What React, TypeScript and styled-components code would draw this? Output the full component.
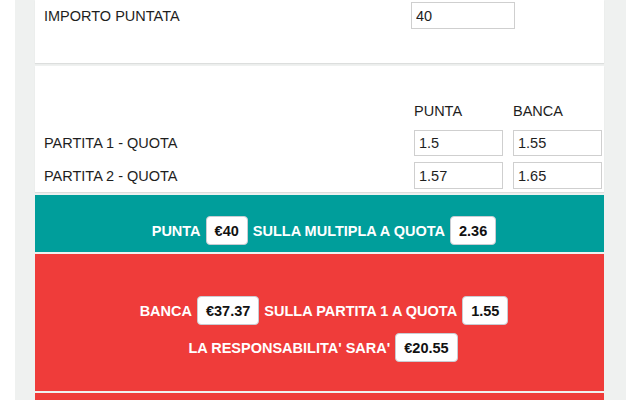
import styled, { createGlobalStyle } from "styled-components";

const GlobalStyle = createGlobalStyle`
  body {
    margin: 0;
    background: #ffffff;
    font-family: "Liberation Sans", Arial, Helvetica, sans-serif;
    color: #222;
  }
`;

const StyledPage = styled.div`
  margin-left: 15px;
  width: 611px;
  min-height: 400px;
  padding: 0 22px 0 20px;
  box-sizing: border-box;
  background: #eff1f0;
  display: flex;
  flex-direction: column;
  gap: 2px;
`;

const StyledCard = styled.div<{ $top?: number; $bottom?: number }>`
  background: #fff;
  box-shadow: 0 1px 1px rgba(0, 0, 0, 0.08);
  padding: ${({ $top = 0 }) => $top}px 2px ${({ $bottom = 0 }) => $bottom}px 9px;
  margin-bottom: 1px;
`;

const StyledGrid = styled.div<{ $cols: string; $rowGap?: number; $right?: number }>`
  display: grid;
  grid-template-columns: ${({ $cols }) => $cols};
  column-gap: 10px;
  row-gap: ${({ $rowGap = 6 }) => $rowGap}px;
  align-items: center;
  padding-right: ${({ $right = 0 }) => $right}px;
`;

const StyledLabel = styled.div`
  font-size: 14.5px;
  color: #1e1e1e;
`;

const StyledHead = styled.div`
  font-size: 14.5px;
  color: #1e1e1e;
  padding-bottom: 5px;
`;

const StyledInput = styled.input<{ $h?: number }>`
  box-sizing: border-box;
  width: 100%;
  height: ${({ $h = 26 }) => $h}px;
  border: 1px solid #cfcfcf;
  border-radius: 0;
  padding: 0 4px;
  font-family: "Liberation Sans", Arial, sans-serif;
  font-size: 14.5px;
  color: #1e1e1e;
  background: #fff;
  outline: none;
`;

const StyledBanner = styled.div<{ $bg: string; $top: number; $bottom: number }>`
  background: ${({ $bg }) => $bg};
  padding: ${({ $top }) => $top}px 0 ${({ $bottom }) => $bottom}px;
  display: flex;
  flex-direction: column;
  align-items: center;
  gap: 8px;
`;

const StyledLine = styled.div<{ $shift?: number }>`
  display: flex;
  align-items: center;
  gap: 5px;
  font-size: 14.5px;
  font-weight: bold;
  color: #fff;
  margin-left: ${({ $shift = 0 }) => $shift}px;
`;

const StyledBadge = styled.span`
  display: inline-flex;
  align-items: center;
  height: 29px;
  box-sizing: border-box;
  padding: 0 8px;
  background: #fff;
  border: 1px solid #c9ccd2;
  border-radius: 4px;
  color: #111;
  font-weight: bold;
  font-size: 14.5px;
`;

export default function App() {
  return (
    <>
      <GlobalStyle />
      <StyledPage>
        <StyledCard $top={2} $bottom={34}>
          <StyledGrid $cols="1fr 104px" $right={87}>
            <StyledLabel>IMPORTO PUNTATA</StyledLabel>
            <StyledInput $h={27} defaultValue="40" />
          </StyledGrid>
        </StyledCard>

        <StyledCard $top={37} $bottom={3}>
          <StyledGrid $cols="1fr 89px 89px" $rowGap={6}>
            <div />
            <StyledHead>PUNTA</StyledHead>
            <StyledHead>BANCA</StyledHead>
            <StyledLabel>PARTITA 1 - QUOTA</StyledLabel>
            <StyledInput defaultValue="1.5" />
            <StyledInput defaultValue="1.55" />
            <StyledLabel>PARTITA 2 - QUOTA</StyledLabel>
            <StyledInput $h={27} defaultValue="1.57" />
            <StyledInput $h={27} defaultValue="1.65" />
          </StyledGrid>
        </StyledCard>

        <StyledBanner $bg="#009e9b" $top={21} $bottom={7}>
          <StyledLine $shift={9}>
            PUNTA <StyledBadge>€40</StyledBadge> SULLA MULTIPLA A QUOTA <StyledBadge>2.36</StyledBadge>
          </StyledLine>
        </StyledBanner>

        <StyledBanner $bg="#ef3c3a" $top={42} $bottom={29}>
          <StyledLine $shift={9}>
            BANCA <StyledBadge>€37.37</StyledBadge> SULLA PARTITA 1 A QUOTA <StyledBadge>1.55</StyledBadge>
          </StyledLine>
          <StyledLine $shift={7}>
            LA RESPONSABILITA' SARA' <StyledBadge>€20.55</StyledBadge>
          </StyledLine>
        </StyledBanner>

        <StyledBanner $bg="#ef3c3a" $top={20} $bottom={20} />
      </StyledPage>
    </>
  );
}
